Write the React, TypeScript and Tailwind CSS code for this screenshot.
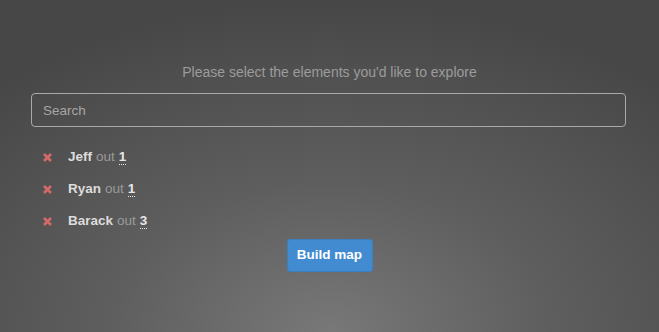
import { useState } from 'react'

const selected = [
  { name: 'Jeff', count: 1 },
  { name: 'Ryan', count: 1 },
  { name: 'Barack', count: 3 },
]

export default function App() {
  const [query, setQuery] = useState('')

  return (
    <div className="h-[332px] w-full overflow-hidden bg-[radial-gradient(ellipse_75%_100%_at_50%_100%,#787878_0%,#5e5e5e_45%,#474747_100%)] font-['Liberation_Sans',Arial,sans-serif] text-[13px]">
      <div className="px-[31px] pt-[63px]">
        <p className="text-center text-[14px] leading-[18px] text-[#9c9c9c]">
          Please select the elements you'd like to explore
        </p>

        <input
          value={query}
          onChange={e => setQuery(e.target.value)}
          placeholder="Search"
          className="mt-[12px] block h-[34px] w-[595px] rounded-[4px] border border-[#a9a9a9] bg-transparent px-[11px] text-[13.5px] text-[#ddd] outline-none placeholder:text-[#a6a6a6]"
        />

        <ul className="mt-[21px] flex flex-col gap-[14px] pl-[11px]">
          {selected.map(item => (
            <li key={item.name} className="flex h-[18px] items-center text-[13.5px]">
              <span className="w-[26px] shrink-0">
                <svg width="11" height="11" viewBox="0 0 11 11">
                  <path d="M2 2 L9 9 M9 2 L2 9" stroke="#d36a6a" strokeWidth="2.6" strokeLinecap="butt" />
                </svg>
              </span>
              <span className="font-bold text-[#dcdcdc]">{item.name}</span>
              <span className="ml-[4px] text-[#9a9a9a]">out</span>
              <abbr
                title={`${item.count} outgoing`}
                className="ml-[4px] font-bold text-[#e6e6e6] no-underline border-b border-dotted border-[#e6e6e6] leading-[15px]"
              >
                {item.count}
              </abbr>
            </li>
          ))}
        </ul>

        <div className="mt-[9px] flex justify-center">
          <button className="h-[33px] w-[86px] rounded-[3px] border border-[#3a7fc0] bg-[#428bd0] text-[13.5px] font-bold text-white">
            Build map
          </button>
        </div>
      </div>
    </div>
  )
}
